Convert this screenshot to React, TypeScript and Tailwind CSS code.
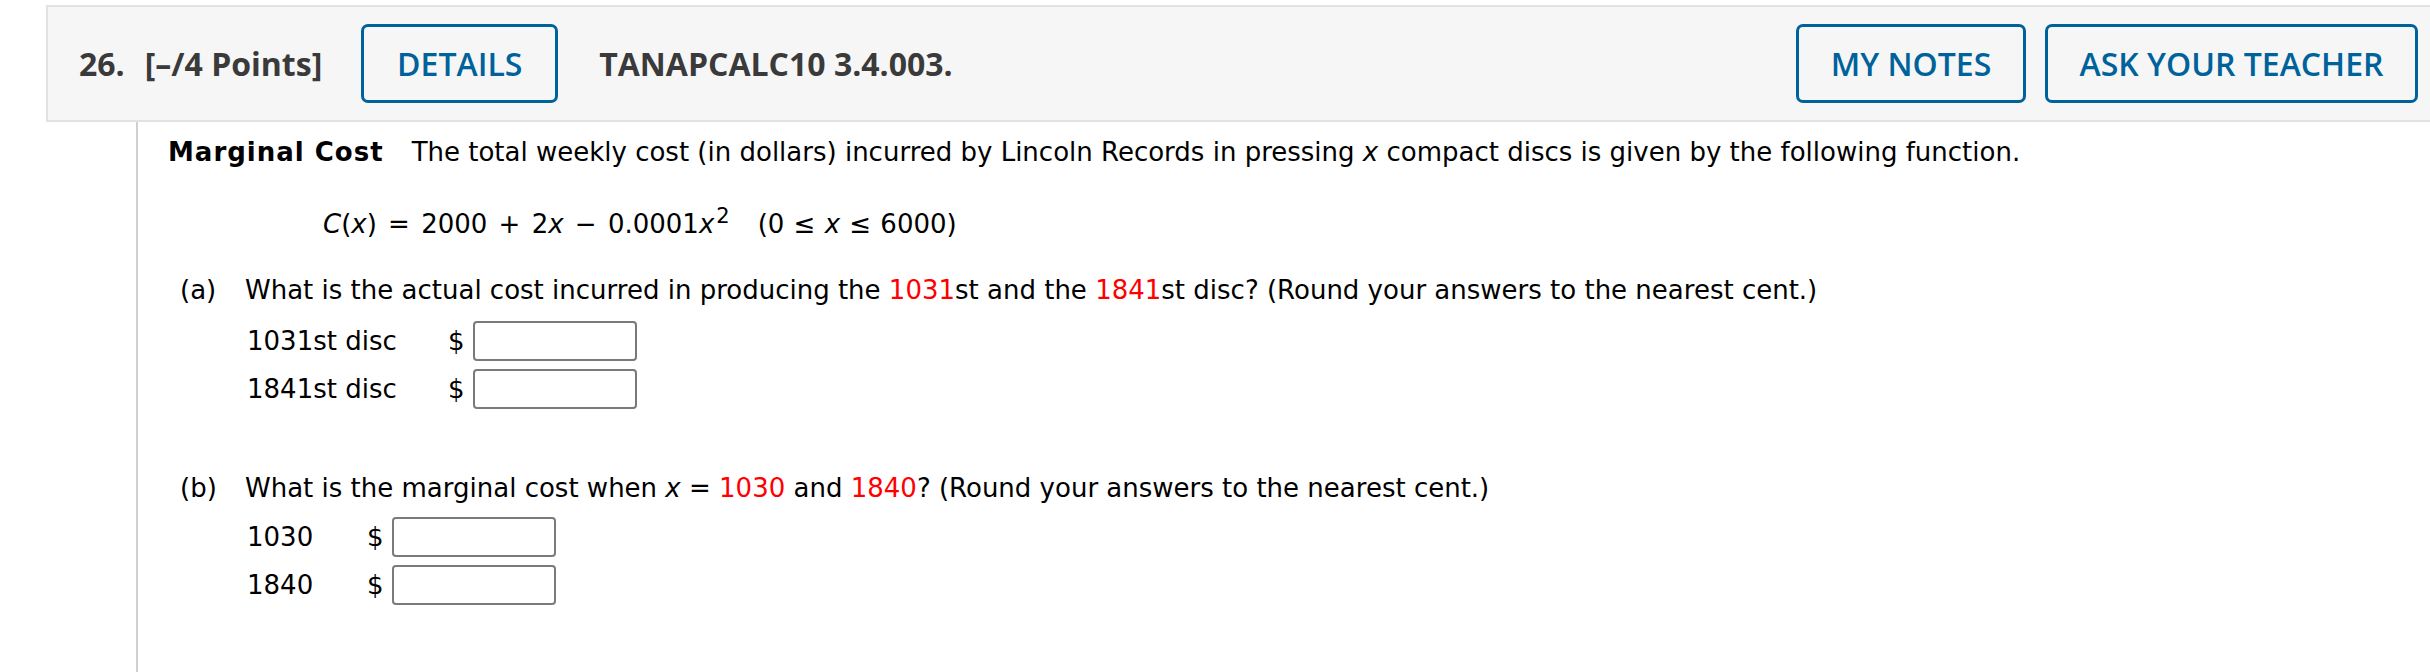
import React from 'react'

const body = { fontFamily: '"DejaVu Sans", Verdana, sans-serif' }
const head = { fontFamily: '"Open Sans", "Liberation Sans", sans-serif' }

function HeaderButton({ label, width }: { label: string; width: string }) {
  return (
    <button
      className={`${width} flex h-[79px] items-center justify-center rounded-[7px] border-[3px] border-[#00629b] bg-[#f6f6f6] text-[32px] font-semibold text-[#00629b]`}
      style={head}
    >
      {label}
    </button>
  )
}

function Red({ children }: { children: React.ReactNode }) {
  return <span className="text-[#ff0000]">{children}</span>
}

function AnswerRow({ label, labelWidth }: { label: string; labelWidth: string }) {
  return (
    <div className="flex h-[40px] items-center">
      <span className={`${labelWidth} shrink-0`}>{label}</span>
      <span className="w-[25px] shrink-0">$</span>
      <div className="h-[40px] w-[164px] rounded-[4px] border-2 border-[#7a7a7a] bg-white" />
    </div>
  )
}

export default function App() {
  return (
    <div className="min-h-[672px] bg-white pl-[46px] pt-[5px]">
      {/* Question header */}
      <div
        className="flex h-[117px] items-center border-2 border-r-0 border-[#e2e2e2] bg-[#f6f6f6] pl-[31px] pr-[12px] text-[#3a3a3a]"
        style={head}
      >
        <span className="text-[32px] font-bold">26.</span>
        <span className="ml-[20px] text-[32px] font-bold">[–/4 Points]</span>
        <div className="ml-[39px]">
          <HeaderButton label="DETAILS" width="w-[197px]" />
        </div>
        <span className="ml-[41px] text-[32px] font-bold">TANAPCALC10 3.4.003.</span>
        <div className="ml-auto flex gap-[19px]">
          <HeaderButton label="MY NOTES" width="w-[230px]" />
          <HeaderButton label="ASK YOUR TEACHER" width="w-[373px]" />
        </div>
      </div>

      {/* Question body */}
      <div className="ml-[90px] min-h-[550px] border-l-2 border-[#d0d0d0] pl-[30px] pt-[15px] text-[26px] leading-[30px] text-black" style={body}>
        <p>
          <span className="font-bold tracking-[1px]">Marginal Cost</span>
          <span className="ml-[28px]">
            The total weekly cost (in dollars) incurred by Lincoln Records in pressing <i>x</i> compact discs is given by the following function.
          </span>
        </p>

        <p className="mt-[42px] pl-[155px]">
          <span className="[word-spacing:3px]">
            <i>C</i>(<i>x</i>) = 2000 + 2<i>x</i> − 0.0001<i>x</i>
          </span>
          <sup className="ml-[2px] text-[21px]">2</sup>
          <span className="ml-[28px] [word-spacing:1px]">
            (0 ≤ <i>x</i> ≤ 6000)
          </span>
        </p>

        {/* Part (a) */}
        <div className="mt-[36px] pl-[12px]">
          <div className="flex">
            <span className="w-[65px] shrink-0">(a)</span>
            <span>
              What is the actual cost incurred in producing the <Red>1031</Red>st and the <Red>1841</Red>st disc? (Round your answers to the nearest cent.)
            </span>
          </div>
          <div className="mt-[16px] flex flex-col gap-[8px] pl-[67px]">
            <AnswerRow label="1031st disc" labelWidth="w-[201px]" />
            <AnswerRow label="1841st disc" labelWidth="w-[201px]" />
          </div>
        </div>

        {/* Part (b) */}
        <div className="mt-[64px] pl-[12px]">
          <div className="flex">
            <span className="w-[65px] shrink-0">(b)</span>
            <span>
              What is the marginal cost when <i>x</i> = <Red>1030</Red> and <Red>1840</Red>? (Round your answers to the nearest cent.)
            </span>
          </div>
          <div className="mt-[14px] flex flex-col gap-[8px] pl-[67px]">
            <AnswerRow label="1030" labelWidth="w-[120px]" />
            <AnswerRow label="1840" labelWidth="w-[120px]" />
          </div>
        </div>
      </div>
    </div>
  )
}
